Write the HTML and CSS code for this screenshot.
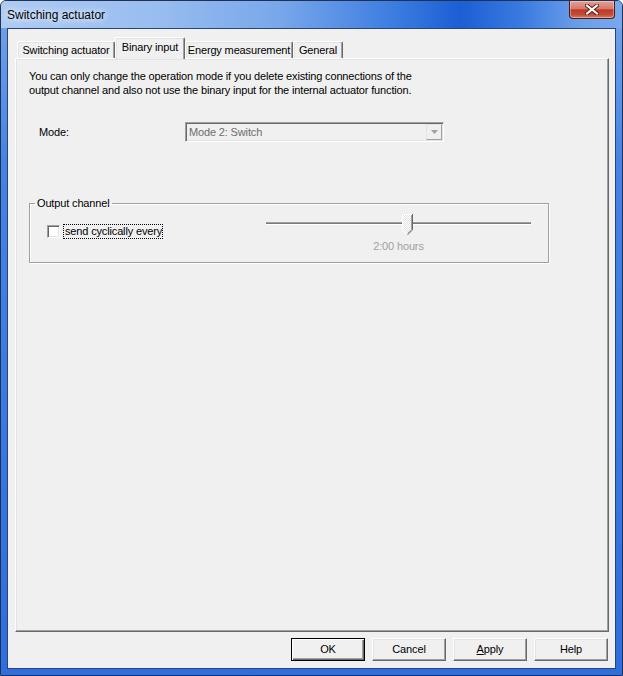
FILE: index.html
```html
<!DOCTYPE html>
<html lang="en">
<head>
<meta charset="utf-8">
<title>Switching actuator</title>
<link rel="stylesheet" href="styles.css">
</head>
<body>
<div class="window">
  <div class="titlebar">
    <span class="title">Switching actuator</span>
    <div class="close">
      <svg width="14" height="11" viewBox="0 0 14 11">
        <path d="M2 1.5 L12 9.5 M12 1.5 L2 9.5" stroke="#5a1f18" stroke-width="4" stroke-linecap="square"/>
        <path d="M2 1.5 L12 9.5 M12 1.5 L2 9.5" stroke="#ffffff" stroke-width="2" stroke-linecap="square"/>
      </svg>
    </div>
  </div>
  <div class="client">
    <div class="tabs">
      <div class="tab w1">Switching actuator</div>
      <div class="tab active w2">Binary input</div>
      <div class="tab w3">Energy measurement</div>
      <div class="tab w4">General</div>
    </div>
    <div class="page">
      <p class="info">You can only change the operation mode if you delete existing connections of the<br>output channel and also not use the binary input for the internal actuator function.</p>
      <div class="mode-row">
        <span class="mode-label">Mode:</span>
        <div class="combo">
          <span class="combo-text">Mode 2: Switch</span>
          <span class="drop">
            <svg width="7" height="4" viewBox="0 0 7 4"><path d="M0 0 H7 L3.5 4 Z" fill="#a0a0a0"/></svg>
          </span>
        </div>
      </div>
      <fieldset class="group">
        <legend class="legend">Output channel</legend>
        <div class="grp-row">
          <label class="chk">
            <span class="box"></span>
            <span class="chk-text">send cyclically every</span>
          </label>
          <div class="slider">
            <div class="rail">
              <div class="track">
                <svg class="thumb" style="left:136px" width="11" height="21" viewBox="0 0 11 21">
                  <defs>
                    <pattern id="chk" width="2" height="2" patternUnits="userSpaceOnUse">
                      <rect width="2" height="2" fill="#ffffff"/>
                      <rect width="1" height="1" fill="#e3e3e3"/>
                      <rect x="1" y="1" width="1" height="1" fill="#e3e3e3"/>
                    </pattern>
                  </defs>
                  <path d="M0 0 H11 V16 L5.5 21 L0 16 Z" fill="url(#chk)"/>
                  <path d="M0.5 16 V0.5 H10" stroke="#ffffff" fill="none"/>
                  <path d="M10.5 0 V15.8 L5.5 20.8" stroke="#696969" fill="none"/>
                  <path d="M9.5 1 V15.4 L5.5 19.4" stroke="#a0a0a0" fill="none"/>
                  <path d="M0.5 16 L5.2 20.6" stroke="#ffffff" fill="none"/>
                </svg>
              </div>
            </div>
            <div class="slider-val">2:00 hours</div>
          </div>
        </div>
      </fieldset>
    </div>
    <div class="buttons">
      <div class="btn default">OK</div>
      <div class="btn">Cancel</div>
      <div class="btn"><u>A</u>pply</div>
      <div class="btn">Help</div>
    </div>
  </div>
</div>
</body>
</html>
```

FILE: styles.css
```css
* { box-sizing: border-box; }
html, body { margin: 0; padding: 0; }
body {
  width: 623px;
  height: 676px;
  overflow: hidden;
  background: #ffffff;
  font-family: "Liberation Sans", Arial, sans-serif;
  font-size: 11px;
  letter-spacing: -0.15px;
  color: #000;
}
.window {
  width: 623px;
  height: 676px;
  display: flex;
  flex-direction: column;
  padding: 0 6px 6px;
  border: 1px solid #1f3154;
  border-radius: 6px 6px 0 0;
  background: linear-gradient(to bottom, #9cc0f0 0px, #6c9fea 30px, #4584e4 160px, #2e6ede 100%);
}
.titlebar {
  height: 27px;
  margin: 0 -6px;
  padding: 0 6px;
  display: flex;
  align-items: center;
  border-radius: 5px 5px 0 0;
  background: linear-gradient(to right, #aecbf2 0%, #98bdf0 25%, #78a7ea 45%, #3a7be0 64%, #1c5ed4 74%, #3b7be0 84%, #6a9eea 93%, #78a9ee 100%);
}
.title {
  font-size: 12px;
  letter-spacing: 0;
  color: #000;
  margin-top: 1px;
  text-shadow: 0 0 6px rgba(255,255,255,0.95), 0 0 10px rgba(255,255,255,0.7);
}
.close {
  margin-left: auto;
  margin-right: 1px;
  align-self: flex-start;
  width: 46px;
  height: 18px;
  border: 1px solid #4a1c16;
  border-top: none;
  border-radius: 0 0 4px 4px;
  background: linear-gradient(to bottom, #e3a196 0%, #d7786a 45%, #bd3a28 52%, #c44a36 80%, #dc7e66 100%);
  box-shadow: inset 0 0 0 1px rgba(255,255,255,0.35);
  display: flex;
  align-items: center;
  justify-content: center;
}
.client {
  flex: 1;
  border: 1px solid #2a4574;
  background: #f0f0f0;
  padding: 8px 6px 0 7px;
  display: flex;
  flex-direction: column;
}
.tabs {
  position: relative;
  z-index: 1;
  height: 22px;
  margin-bottom: -1px;
  padding-left: 2px;
  display: flex;
  align-items: flex-end;
}
.tab {
  height: 17px;
  margin-bottom: 1px;
  padding-bottom: 1px;
  display: flex;
  align-items: center;
  justify-content: center;
  background: #f0f0f0;
  border-top: 1px solid #ffffff;
  border-left: 1px solid #ffffff;
  border-right: 1px solid #696969;
  border-radius: 2px 2px 0 0;
  box-shadow: inset -1px 0 #a0a0a0, inset 1px 1px #e3e3e3;
  white-space: nowrap;
}
.tab.active {
  height: 22px;
  margin-bottom: 0;
  padding-bottom: 3px;
}
.w1 { width: 98px; }
.w2 { width: 70px; }
.w3 { width: 108px; }
.w4 { width: 50px; }
.page {
  width: 594px;
  height: 574px;
  border: 1px solid;
  border-color: #ffffff #696969 #696969 #ffffff;
  box-shadow: inset -1px -1px #a0a0a0, inset 1px 1px #e3e3e3;
  padding: 10px 13px;
}
.info {
  margin: 0;
  line-height: 14px;
  white-space: nowrap;
}
.mode-row {
  margin-top: 25px;
  padding-left: 10px;
  display: flex;
  align-items: center;
}
.mode-label { width: 146px; }
.combo {
  width: 259px;
  height: 20px;
  border: 1px solid;
  border-color: #a0a0a0 #ffffff #ffffff #a0a0a0;
  box-shadow: inset 1px 1px #696969, inset -1px -1px #e3e3e3;
  padding: 1px;
  display: flex;
  align-items: center;
}
.combo-text {
  flex: 1;
  padding-left: 2px;
  color: #6d6d6d;
}
.drop {
  width: 16px;
  height: 16px;
  border: 1px solid;
  border-color: #e3e3e3 #a0a0a0 #a0a0a0 #e3e3e3;
  background: #f0f0f0;
  display: flex;
  align-items: center;
  justify-content: center;
}
.group {
  margin: 54px 0 0 0;
  width: 520px;
  border: 1px solid #a0a0a0;
  box-shadow: inset 1px 1px #ffffff, 1px 1px #ffffff;
  padding: 4px 17px 9px 17px;
}
.legend {
  margin-left: -12px;
  padding: 0 2px;
  line-height: 14px;
}
.grp-row {
  display: flex;
  align-items: flex-start;
}
.chk {
  margin-top: 10px;
  height: 15px;
  display: flex;
  align-items: center;
}
.box {
  width: 13px;
  height: 13px;
  background: #ffffff;
  border: 1px solid;
  border-color: #a0a0a0 #ffffff #ffffff #a0a0a0;
  box-shadow: inset 1px 1px #696969, inset -1px -1px #e3e3e3;
}
.chk-text {
  margin-left: 3px;
  border: 1px dotted #000;
  line-height: 13px;
  padding: 0 0 0 1px;
}
.slider {
  margin-left: auto;
  width: 265px;
}
.rail {
  height: 20px;
  padding-top: 8px;
}
.track {
  position: relative;
  height: 3px;
  border-top: 1px solid #a0a0a0;
  border-bottom: 1px solid #ffffff;
  background: #7a7a7a;
}
.thumb {
  position: absolute;
  top: -9px;
  display: block;
}
.slider-val {
  margin-top: 5px;
  line-height: 14px;
  text-align: center;
  color: #a0a0a0;
}
.buttons {
  margin-top: 6px;
  display: flex;
  justify-content: flex-end;
  gap: 7px;
  padding-right: 1px;
}
.btn {
  width: 74px;
  height: 23px;
  padding-bottom: 2px;
  display: flex;
  align-items: center;
  justify-content: center;
  background: #f0f0f0;
  border: 1px solid;
  border-color: #ffffff #696969 #696969 #ffffff;
  box-shadow: inset -1px -1px #a0a0a0, inset 1px 1px #e3e3e3;
}
.btn.default {
  border: 1px solid #000;
  box-shadow: inset 1px 1px #ffffff, inset -1px -1px #696969, inset -2px -2px #a0a0a0;
}
.btn u { text-decoration: underline; }
```
